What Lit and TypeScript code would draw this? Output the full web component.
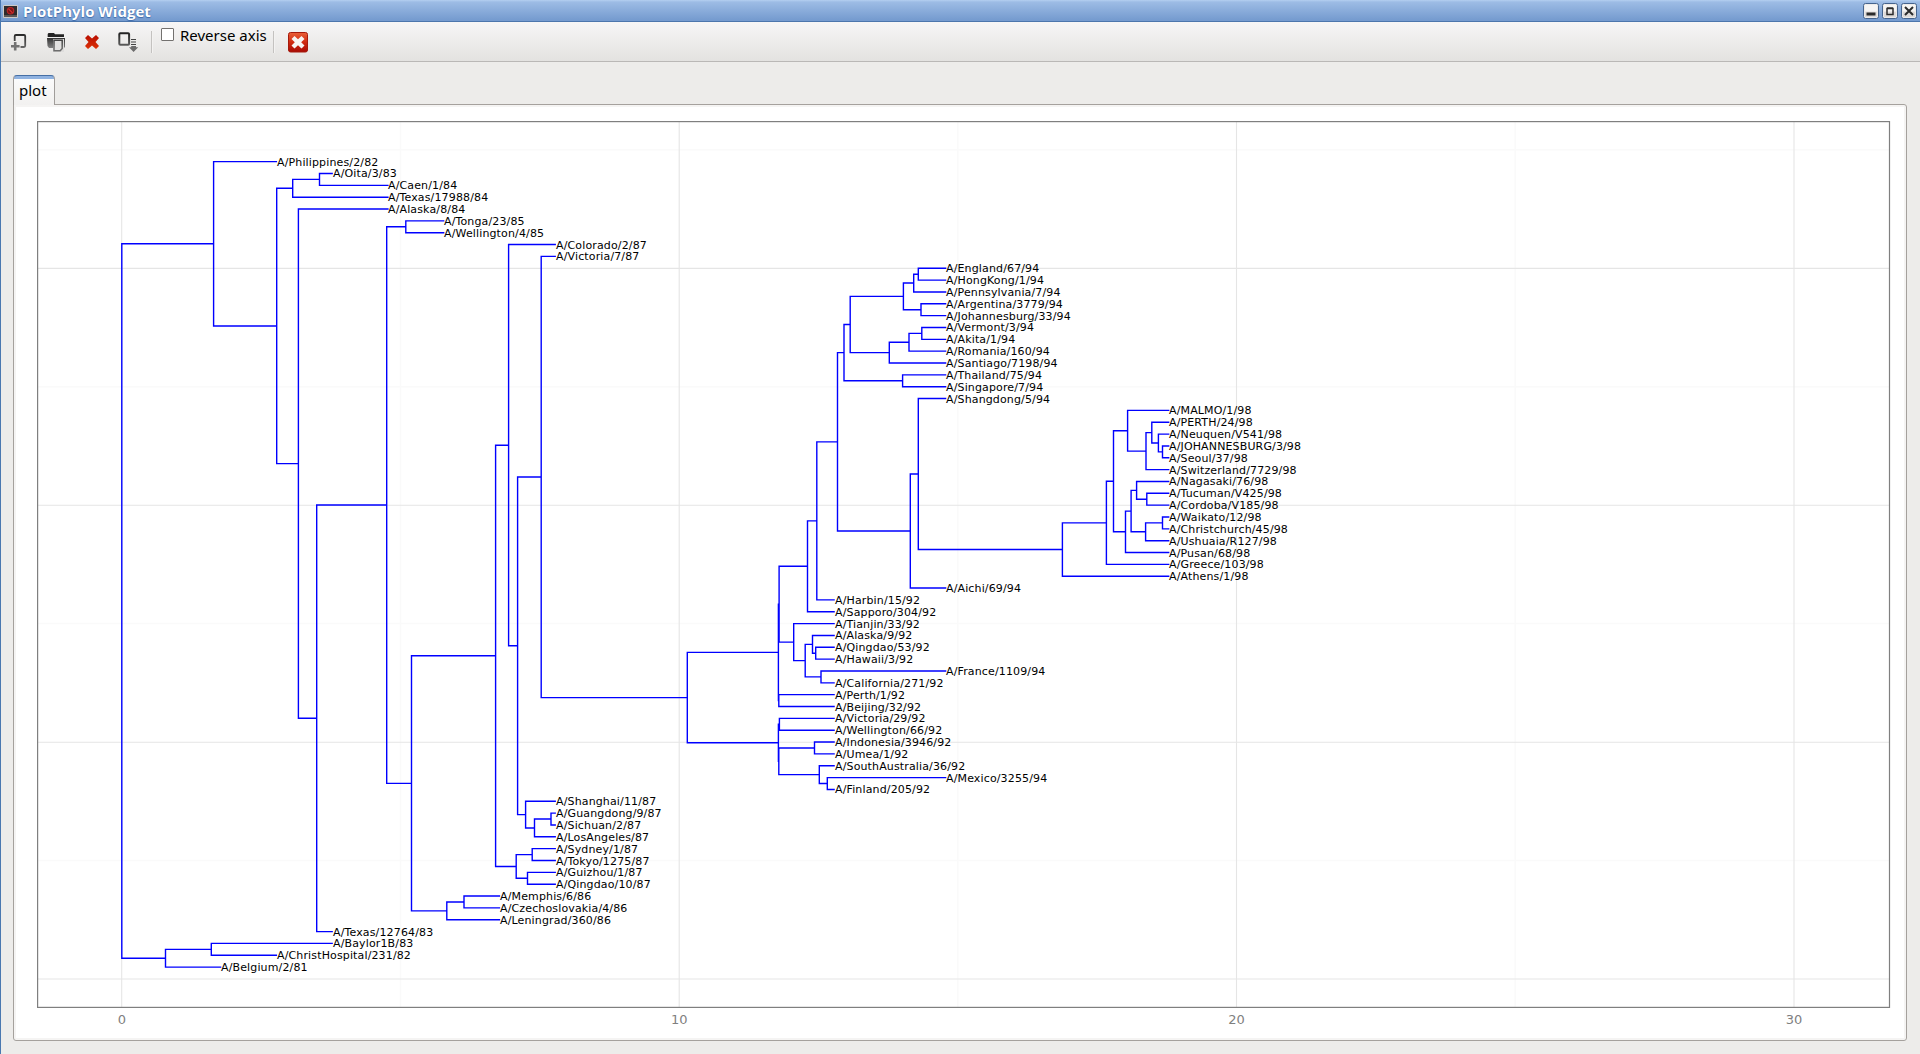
import { LitElement, html, svg, css } from "lit";
import { customElement } from "lit/decorators.js";

type Tree = string | [number, Tree, Tree];

// Inner nodes are [x, upper child, lower child]; a leaf is its strain name.
const eu: Tree = [903.4,
  [913.7, [918.3, "A/England/67/94", "A/HongKong/1/94"], "A/Pennsylvania/7/94"],
  [921, "A/Argentina/3779/94", "A/Johannesburg/33/94"]];
const am: Tree = [889.3,
  [909, [921.8, "A/Vermont/3/94", "A/Akita/1/94"], "A/Romania/160/94"],
  "A/Santiago/7198/94"];
const asia: Tree = [902.6, "A/Thailand/75/94", "A/Singapore/7/94"];

const late98: Tree = [1062.4,
  [1106.4,
    [1113.5,
      [1127.6, "A/MALMO/1/98",
        [1146,
          [1151.8, "A/PERTH/24/98",
            [1158.4, "A/Neuquen/V541/98", [1162.5, "A/JOHANNESBURG/3/98", "A/Seoul/37/98"]]],
          "A/Switzerland/7729/98"]],
      [1125.5,
        [1131.1,
          [1136.6, "A/Nagasaki/76/98", [1146.8, "A/Tucuman/V425/98", "A/Cordoba/V185/98"]],
          [1145.6, [1162.5, "A/Waikato/12/98", "A/Christchurch/45/98"], "A/Ushuaia/R127/98"]],
        "A/Pusan/68/98"]],
    "A/Greece/103/98"],
  "A/Athens/1/98"];

const upper92: Tree = [779.1,
  [807.5,
    [816.8,
      [837.5,
        [844, [850.2, eu, am], asia],
        [910.3, [918.3, "A/Shangdong/5/94", late98], "A/Aichi/69/94"]],
      "A/Harbin/15/92"],
    "A/Sapporo/304/92"],
  [793.7, "A/Tianjin/33/92",
    [805.2,
      [812.5, "A/Alaska/9/92", [815.7, "A/Qingdao/53/92", "A/Hawaii/3/92"]],
      [821, "A/France/1109/94", "A/California/271/92"]]]];

const clade92: Tree = [687.3,
  [778.4, upper92, [778.8, "A/Perth/1/92", "A/Beijing/32/92"]],
  [778.4,
    [779.4, "A/Victoria/29/92", "A/Wellington/66/92"],
    [778.8,
      [814.5, "A/Indonesia/3946/92", "A/Umea/1/92"],
      [819.3, "A/SouthAustralia/36/92", [827.3, "A/Mexico/3255/94", "A/Finland/205/92"]]]]];

const clade87: Tree = [495.6,
  [508.6, "A/Colorado/2/87",
    [517.6,
      [541.2, "A/Victoria/7/87", clade92],
      [525.6, "A/Shanghai/11/87",
        [534.5, [551, "A/Guangdong/9/87", "A/Sichuan/2/87"], "A/LosAngeles/87"]]]],
  [516.2,
    [532.2, "A/Sydney/1/87", "A/Tokyo/1275/87"],
    [527.5, "A/Guizhou/1/87", "A/Qingdao/10/87"]]];

const tree: Tree = [121.8,
  [213.6, "A/Philippines/2/82",
    [276.7,
      [292.7, [319.5, "A/Oita/3/83", "A/Caen/1/84"], "A/Texas/17988/84"],
      [298.4, "A/Alaska/8/84",
        [316.7,
          [386.7,
            [405.8, "A/Tonga/23/85", "A/Wellington/4/85"],
            [411.5, clade87,
              [446.8, [464, "A/Memphis/6/86", "A/Czechoslovakia/4/86"], "A/Leningrad/360/86"]]],
          "A/Texas/12764/83"]]]],
  [165.5,
    [211.3, "A/Baylor1B/83", "A/ChristHospital/231/82"],
    "A/Belgium/2/81"]];

const TOP = 161.65;
const ROW = 11.845;

function layout(root: Tree) {
  const labels: { x: number; y: number; name: string }[] = [];
  let d = "";
  const walk = (t: Tree): { x: number; y: number } => {
    if (typeof t === "string") {
      const x = 221.3 + (Number(t.slice(-2)) - 81) * 55.77;
      const y = TOP + labels.length * ROW;
      labels.push({ x, y, name: t });
      return { x, y };
    }
    const a = walk(t[1]);
    const b = walk(t[2]);
    d += `M${a.x} ${a.y.toFixed(2)}H${t[0]}V${b.y.toFixed(2)}H${b.x}`;
    return { x: t[0], y: (a.y + b.y) / 2 };
  };
  walk(root);
  return { labels, d };
}

@customElement("phylo-plot")
class PhyloPlot extends LitElement {
  static styles = css`
    :host { display: block; }
    svg { display: block; width: 1892px; height: 935px; }
    .branch { fill: none; stroke: #0000ff; stroke-width: 1.4; }
    .major { stroke: #e5e5e5; stroke-width: 1.1; }
    .minor { stroke: #fafafa; stroke-width: 1.5; }
    .frame { fill: none; stroke: #7f7f7f; stroke-width: 1.2; }
    .leaf { font: 11px "DejaVu Sans", sans-serif; letter-spacing: 0.14px; fill: #000; }
    .tick { font: 13px "DejaVu Sans", sans-serif; fill: #7f7f7f; text-anchor: middle; }
  `;
  render() {
    const { labels, d } = layout(tree);
    const v = (x: number, c: string) => svg`<line class=${c} x1=${x} x2=${x} y1="122" y2="1007"/>`;
    const h = (y: number, c: string) => svg`<line class=${c} x1="38" x2="1889" y1=${y} y2=${y}/>`;
    return html`<svg viewBox="14 105 1892 935">
      ${[400.5, 957.8, 1515.2].map((x) => v(x, "minor"))}
      ${[149.8, 386.7, 623.6, 860.5].map((y) => h(y, "minor"))}
      ${[121.7, 679.2, 1236.5, 1794].map((x) => v(x, "major"))}
      ${[268.4, 505.3, 742.2, 979].map((y) => h(y, "major"))}
      <path class="branch" d=${d}></path>
      ${labels.map((l) => svg`<text class="leaf" x=${Math.floor(l.x + 0.3)} y=${Math.round(l.y + 4)}>${l.name}</text>`)}
      <rect class="frame" x="37.6" y="121.6" width="1851.9" height="885.8"></rect>
      ${[0, 10, 20, 30].map((n, i) => svg`<text class="tick" x=${122 + i * 557.3} y="1024">${n}</text>`)}
    </svg>`;
  }
}

@customElement("app-root")
class AppRoot extends LitElement {
  static styles = css`
    :host { display: block; }
    .window {
      display: flex; flex-direction: column; box-sizing: border-box;
      width: 100vw; height: 100vh; overflow: hidden;
      background: #edecea; border-left: 1px solid #4a78b0;
      font-family: "Noto Sans", sans-serif; color: #000;
    }
    .title {
      display: flex; align-items: center; height: 22px; flex: none;
      box-sizing: border-box; padding: 0 3px 0 2px; margin-left: -1px;
      background: linear-gradient(#b4cff0 0, #9dbce5 2px, #759bcf 20px);
      border-bottom: 1px solid #4c76ac;
    }
    .title svg { display: block; flex: none; }
    .name {
      flex: 1; margin-left: 5px; color: #fff; font: bold 15px/20px "Open Sans", sans-serif;
      text-shadow: 0 0 1px #3f6cab, 0 1px 1px #3f6cab; white-space: nowrap;
    }
    .buttons { display: flex; gap: 3px; }
    .tools {
      display: flex; align-items: flex-start; height: 40px; flex: none;
      box-sizing: border-box; border-bottom: 1px solid #bab8b6;
      background: linear-gradient(#f7f6f6, #e3e2e0);
    }
    .tools svg { display: block; flex: none; }
    .sep { width: 1px; height: 22px; margin-top: 9px; background: #c4c2c0; border-right: 1px solid #f3f2f1; }
    .check { display: flex; align-items: flex-start; margin: 3px 0 0 8px; width: 112px; }
    .box { box-sizing: border-box; flex: none; width: 13px; height: 13px; margin-top: 3px; background: #fff; border: 1px solid #73716f; border-radius: 1px; }
    .label { margin-left: 6px; font-size: 15px; line-height: 20px; white-space: nowrap; }
    .body { flex: 1; padding: 13px 13px 13px 12px; display: flex; flex-direction: column; }
    .tab {
      width: 42px; height: 30px; box-sizing: border-box; margin-bottom: -1px; z-index: 1;
      border: 1px solid #a09d9a; border-top: 1px solid #466fa5; border-bottom: none;
      border-radius: 4px 4px 0 0; padding: 4px 0 0 5px;
      background: linear-gradient(#8fb2e0 0 3px, #fbfbfb 3px, #f2f1f0);
      font-size: 15px; line-height: 20px;
    }
    .pane {
      flex: 1; border: 1px solid #a5a19d; border-radius: 0 3px 3px 3px;
      background: #fff; box-shadow: inset 0 0 0 2px #f5f4f3; overflow: hidden;
    }
  `;
  render() {
    return html`<div class="window">
      <div class="title">
        <svg width="16" height="16" viewBox="0 0 16 16">
          <rect x="1" y="2" width="15" height="13" rx="1" fill="#cfcac5"/>
          <rect x="2" y="3" width="13" height="9" fill="#2f2b2c"/>
          <rect x="2" y="12" width="13" height="2" fill="#5c5857"/>
          <circle cx="8.5" cy="7.7" r="3.2" fill="#7c1717" stroke="#b82626" stroke-width="1.2"/>
          <path d="M6.5 5.8l4 4" stroke="#d33" stroke-width="1.1"/>
        </svg>
        <div class="name">PlotPhylo Widget</div>
        <div class="buttons">${["min", "max", "close"].map((k) => html`
          <svg width="16" height="16" viewBox="0 0 16 16">
            <rect x=".5" y=".5" width="15" height="15" rx="2" fill="#eceae8" stroke="#45648e"/>
            <rect x="2" y="2" width="12" height="6" fill="#f6f5f4"/>
            <rect x="2" y="9" width="12" height="5" fill="#dddad8"/>
            <path fill="none" stroke="#2b2b2b" stroke-width=${k === "min" ? 3 : k === "max" ? 1.5 : 2}
              d=${k === "min" ? "M3.5 11h9" : k === "max" ? "M5 5.5h6v6h-6zM5 5h6" : "M4 4l8 8M12 4l-8 8"}></path>
          </svg>`)}
        </div>
      </div>
      <div class="tools">
        <svg width="150" height="39" viewBox="1 22 150 39">
          <defs>
            <linearGradient id="g" x1="0" y1="0" x2="0" y2="1"><stop offset="0" stop-color="#333"/><stop offset="1" stop-color="#808080"/></linearGradient>
            <linearGradient id="o" gradientUnits="userSpaceOnUse" x1="0" y1="33" x2="0" y2="49"><stop offset="0" stop-color="#222"/><stop offset="1" stop-color="#6d6d6d"/></linearGradient>
            <linearGradient id="r" x1="0" y1="0" x2="0" y2="1"><stop offset="0" stop-color="#b80d00"/><stop offset="1" stop-color="#dc3208"/></linearGradient>
          </defs>
          <path d="M14.7 41V36.2Q14.7 35 15.9 35H24Q25.2 35 25.2 36.2V45.8Q25.2 47 24 47H20.5" fill="none" stroke="url(#o)" stroke-width="1.8"/>
          <path d="M15.2 42v8.6M11 46.2h8.6" stroke="#737373" stroke-width="2.6"/>
          <path d="M48.5 33h5.5l1 1.300h9v2.700H47.700V34z" fill="#242424"/>
          <path d="M47 38h18v9l-1 1H49l-1.500-2z" fill="url(#g)"/>
          <rect x="53" y="39" width="11" height="13" fill="#dedddc"/>
          <path d="M54 40.300h8.200v8.200l-2 2.300H54z" fill="#e2e1e0" stroke="url(#o)" stroke-width="1.500"/>
          <path d="M85 38l3-3 4 3.500 4-3.500 3 3-3.500 4 3.500 4-3 3-4-3.500-4 3.500-3-3 3.500-4z" fill="url(#r)"/>
          <rect x="119.300" y="33.300" width="9.800" height="11.400" rx="1" fill="none" stroke="url(#o)" stroke-width="2"/>
          <path d="M131 39.500h5M131 42h5M131 44.500h5" stroke="#444" stroke-width="1.200"/>
          <path d="M131.200 46h4.800v1.200h2.200l-4.600 4.800-4.600-4.800h2.200z" fill="#6c6c6c"/>
        </svg>
        <div class="sep"></div>
        <div class="check"><div class="box"></div><div class="label">Reverse axis</div></div>
        <div class="sep"></div>
        <svg width="50" height="39" viewBox="275 22 50 39">
          <defs><linearGradient id="b" x1="0" y1="0" x2="0" y2="1"><stop offset="0" stop-color="#ea6038"/><stop offset=".5" stop-color="#d02a10"/><stop offset="1" stop-color="#a80a04"/></linearGradient></defs>
          <rect x="288.500" y="32.500" width="19" height="19.500" rx="2" fill="url(#b)" stroke="#a51a0c"/>
          <path d="M291.500 39l3-3 3.500 3.300 3.500-3.300 3 3-3.300 3.300 3.300 3.300-3 3-3.500-3.300-3.500 3.300-3-3 3.300-3.300z" fill="#f8f4f2"/>
        </svg>
      </div>
      <div class="body">
        <div class="tab">plot</div>
        <div class="pane"><phylo-plot></phylo-plot></div>
      </div>
    </div>`;
  }
}
